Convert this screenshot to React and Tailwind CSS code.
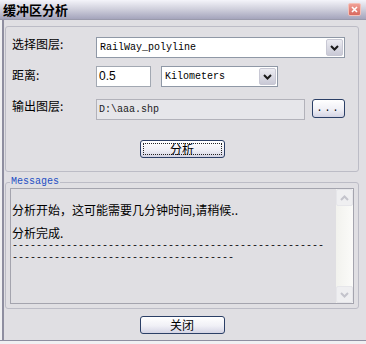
import React from 'react';

const cjk = "font-['Noto_Sans_CJK_SC',sans-serif]";
const mono = "font-['Liberation_Mono',monospace]";

function Chevron({ up = false, color = '#1a1a1a' }) {
    return (
        <svg width="9" height="6" viewBox="0 0 9 6" className={up ? 'rotate-180' : ''}>
            <polyline points="1,1 4.5,4.5 8,1" fill="none" stroke={color} strokeWidth="2" />
        </svg>
    );
}

function Combo({ value, className }) {
    return (
        <div className={`h-[21px] flex bg-white border border-[#8f98a6] p-[1px] ${className}`}>
            <span className={`flex-1 pl-[2px] text-[10px] leading-[17px] text-black ${mono}`}>{value}</span>
            <span className="w-[17px] flex items-center justify-center rounded-[2px] border border-[#c8c8d4] bg-[linear-gradient(#ececf2,#c9c9d6)]">
                <Chevron />
            </span>
        </div>
    );
}

function XpButton({ children, focus = false, className = '' }) {
    return (
        <button
            type="button"
            className={`h-[18px] flex p-[2px] rounded-[3px] border border-[#2b3f66] bg-[linear-gradient(#ffffff,#f0f0f6_55%,#d4d4e4)] ${className}`}
        >
            <span
                className={`flex-1 flex items-center justify-center text-[12px] leading-none text-black ${cjk} ${
                    focus ? 'border border-dotted border-[#222]' : ''
                }`}
            >
                {children}
            </span>
        </button>
    );
}

export default function App() {
    return (
        <div className={`w-[366px] h-[344px] flex flex-col bg-[#e0dfe3] overflow-hidden ${cjk}`}>
            {/* Title bar */}
            <div className="h-[20px] shrink-0 flex items-center justify-between pl-[3px] pr-[5px] border-b border-[#9a9aac] bg-[linear-gradient(#f4f4fa,#d2d2de_45%,#a4a4bc)]">
                <span className="text-[13px] font-bold leading-none text-black">缓冲区分析</span>
                <span className="w-[13px] h-[13px] flex items-center justify-center rounded-[2px] border border-[#f4c0b8] bg-[linear-gradient(#f0a096,#d8685e)]">
                    <svg width="7" height="7" viewBox="0 0 7 7">
                        <path d="M1 1 L6 6 M6 1 L1 6" stroke="#fff" strokeWidth="1.6" />
                    </svg>
                </span>
            </div>

            {/* Body */}
            <div className="flex-1 flex border-l-2 border-[#f0f0f2]">
                <div className="flex-1 flex flex-col border-l-2 border-[#8e8ea0] pl-[1px]">
                    {/* Parameters group */}
                    <div className="mt-[6px] w-[354px] h-[146px] flex flex-col rounded-[3px] border border-[#bcbcc6] pt-[10px] pl-[6px]">
                        <div className="h-[21px] flex items-start">
                            <span className="w-[84px] text-[12px] leading-[14px] text-black">选择图层:</span>
                            <Combo value="RailWay_polyline" className="w-[249px]" />
                        </div>
                        <div className="mt-[8px] h-[21px] flex items-start">
                            <span className="w-[84px] pt-[2px] text-[12px] leading-[14px] text-black">距离:</span>
                            <div className="w-[55px] h-[21px] bg-white border border-[#a2a8b2] pl-[2px] text-[12px] leading-[19px] text-black font-['Liberation_Sans',sans-serif]">
                                0.5
                            </div>
                            <Combo value="Kilometers" className="ml-[10px] w-[117px]" />
                        </div>
                        <div className="mt-[12px] h-[21px] flex items-start">
                            <span className="w-[84px] text-[12px] leading-[14px] text-black">输出图层:</span>
                            <div className={`w-[209px] h-[21px] bg-[#e6e6ea] border border-[#b2b2ba] pl-[2px] text-[10px] leading-[19px] text-[#222] ${mono}`}>
                                D:\aaa.shp
                            </div>
                            <XpButton className="ml-[7px] w-[33px] h-[19px]">
                                <span className={`${mono} text-[10px] tracking-[2px]`}>...</span>
                            </XpButton>
                        </div>
                        <div className="mt-[20px] flex justify-center pr-[6px]">
                            <XpButton focus className="w-[85px] border-[#1c3a78]">分析</XpButton>
                        </div>
                    </div>

                    {/* Messages group */}
                    <div className="relative mt-[10px] w-[354px] h-[127px] rounded-[3px] border border-[#bcbcc6] pt-[5px] px-[4px]">
                        <span className={`absolute left-[4px] -top-[7px] px-[1px] bg-[#e0dfe3] text-[10px] leading-[12px] text-[#1f4fc4] ${mono}`}>
                            Messages
                        </span>
                        <div className="h-[116px] flex border border-[#a4a4ae] bg-[#e0dfe3]">
                            <div className="flex-1 flex flex-col pl-[1px] pt-[14px] text-black">
                                <div className="text-[12px] leading-[13px] whitespace-nowrap">分析开始，这可能需要几分钟时间,请稍候..</div>
                                <div className="mt-[10px] text-[12px] leading-[13px] whitespace-nowrap">分析完成.</div>
                                <div className={`mt-[1px] text-[10px] leading-[12px] whitespace-nowrap text-[#111] ${mono}`}>{'-'.repeat(52)}</div>
                                <div className={`text-[10px] leading-[12px] whitespace-nowrap text-[#111] ${mono}`}>{'-'.repeat(37)}</div>
                            </div>
                            <div className="w-[17px] flex flex-col justify-between bg-[linear-gradient(90deg,#f2f2ee,#fbfbf9)]">
                                <span className="h-[17px] flex items-center justify-center rounded-[2px] border border-[#e6e6ea] bg-[#efeff1]">
                                    <Chevron up color="#c4c4cc" />
                                </span>
                                <span className="h-[17px] flex items-center justify-center rounded-[2px] border border-[#e6e6ea] bg-[#efeff1]">
                                    <Chevron color="#c4c4cc" />
                                </span>
                            </div>
                        </div>
                    </div>

                    {/* Close */}
                    <div className="mt-[7px] flex justify-center w-[354px]">
                        <XpButton className="w-[85px]">关闭</XpButton>
                    </div>
                </div>
            </div>
            <div className="h-[1px] shrink-0 bg-[#8e8ea0]" />
            <div className="h-[3px] shrink-0 bg-[#f0f0f2]" />
        </div>
    );
}
